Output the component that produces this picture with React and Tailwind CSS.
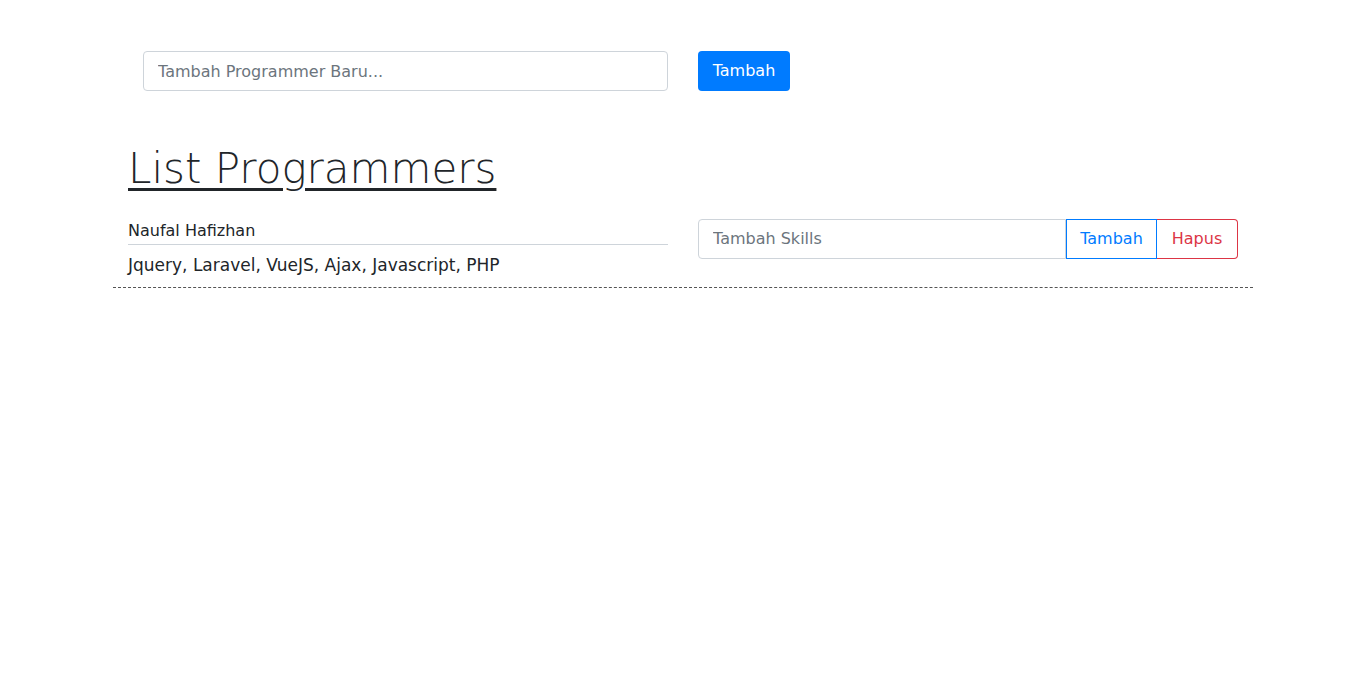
export default function App() {
  const programmers = [
    {
      name: "Naufal Hafizhan",
      skills: ["Jquery", "Laravel", "VueJS", "Ajax", "Javascript", "PHP"],
    },
  ];

  return (
    <div className="min-h-[686px] bg-white text-[#212529] font-['DejaVu_Sans','Noto_Sans',sans-serif]">
      <div className="w-[1140px] mx-auto px-[15px]">
        {/* form tambah programmer */}
        <div className="grid grid-cols-2 gap-[30px] pt-[51px]">
          <div className="pl-[15px]">
            <input
              type="text"
              placeholder="Tambah Programmer Baru..."
              className="w-full h-[40px] px-[14px] text-[16px] border border-[#ced4da] rounded-[4px] placeholder:text-[#6c757d] outline-none"
            />
          </div>
          <div>
            <button className="h-[40px] w-[92px] text-[16px] text-white bg-[#007bff] rounded-[4px]">
              Tambah
            </button>
          </div>
        </div>

        <h1 className="mt-[53px] text-[42px] leading-[50px] font-extralight underline decoration-[3px] underline-offset-[5px] inline-block">
          List Programmers
        </h1>

        {programmers.map((p) => (
          <div
            key={p.name}
            className="-mx-[15px] mt-[24px] grid grid-cols-2 border-b border-dashed border-[#555] pb-[9px]"
          >
            <div className="px-[15px]">
              <div className="text-[16px] leading-[26px] border-b border-[#ced4da]">
                {p.name}
              </div>
              <div className="text-[17px] leading-[26px] mt-[7px]">
                {p.skills.join(", ")}
              </div>
            </div>
            <div className="px-[15px] pt-[1px]">
              <div className="flex h-[40px]">
                <input
                  type="text"
                  placeholder="Tambah Skills"
                  className="flex-1 min-w-0 px-[14px] text-[16px] border border-[#ced4da] rounded-l-[4px] placeholder:text-[#6c757d] outline-none"
                />
                <button className="w-[91px] text-[16px] text-[#007bff] border border-[#007bff]">
                  Tambah
                </button>
                <button className="w-[81px] text-[16px] text-[#dc3545] border border-[#dc3545] border-l-0 rounded-r-[4px]">
                  Hapus
                </button>
              </div>
            </div>
          </div>
        ))}
      </div>
    </div>
  );
}
